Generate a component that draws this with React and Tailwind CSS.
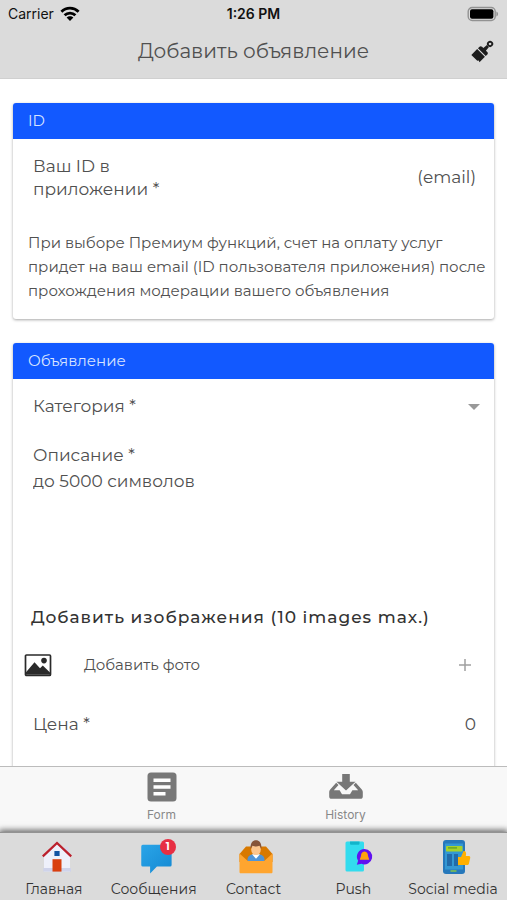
const navItems = [
  { id: 'home', label: 'Главная', Icon: HomeIcon },
  { id: 'messages', label: 'Сообщения', Icon: MessagesIcon, badge: 1 },
  { id: 'contact', label: 'Contact', Icon: ContactIcon },
  { id: 'push', label: 'Push', Icon: PushIcon },
  { id: 'social', label: 'Social media', Icon: SocialIcon },
];

function WifiIcon() {
  return (
    <svg className="h-4 w-5" viewBox="0 0 20 16" aria-hidden="true">
      <g fill="none" stroke="#000" strokeWidth="2.8">
        <path d="M1.4 5.8C6.3 1 13.7 1 18.6 5.8" />
        <path d="M4.6 9.3c3-3 7.8-3 10.800 0" />
      </g>
      <path d="M10 15 6.600 11.600c1.900-1.800 4.900-1.800 6.800 0z" />
    </svg>
  );
}

function BatteryIcon() {
  return (
    <svg className="h-4 w-8" viewBox="0 0 32 16" aria-hidden="true">
      <rect x="1.2" y="1.5" width="27" height="13" rx="4" fill="none" stroke="#929292" strokeWidth="1.4" />
      <rect x="3" y="3.3" width="23.4" height="9.4" rx="2" />
      <path d="M29.4 5.5c2.2 1 2.2 4 0 5z" fill="#929292" />
    </svg>
  );
}

function BrushIcon() {
  return (
    <svg className="h-6 w-6" viewBox="0 0 24 24" aria-hidden="true">
      <g transform="rotate(45 12 12)" fill="#1d1d1d">
        <path d="M6.500 14.800h11V22.500l-1.800-.8-.8 1.300H6.500z" />
        <path d="M6.500 13.600v-2.200c0-1 .7-1.700 1.800-1.700h1.900L10.600 5h2.800l.4 4.700h1.900c1.100 0 1.800.7 1.800 1.700v2.200z" />
        <circle cx="12" cy="2" r="2.200" fill="none" stroke="#1d1d1d" strokeWidth="1.800" />
      </g>
    </svg>
  );
}

function PhotoIcon() {
  return (
    <svg className="h-6 w-7" viewBox="0 0 28 24" aria-hidden="true">
      <rect x="1.500" y="2" width="25" height="20.500" rx="1" fill="#fff" stroke="#2a2a2a" strokeWidth="1.700" />
      <path d="M2 21.800v-2.600l8.500-10 5.500 6 2.800-2.800 7.200 7v2.400z" fill="#2a2a2a" />
      <circle cx="20" cy="7.600" r="2.800" fill="#2a2a2a" />
    </svg>
  );
}

function FormIcon() {
  return (
    <svg className="h-8 w-8" viewBox="0 0 32 32" aria-hidden="true">
      <rect x="1.500" y="1.500" width="29" height="29" rx="3.500" fill="#787878" />
      <path d="M7.500 7.500h17v3.600h-17zM7.500 14.200h17v3.600h-17zM7.500 20.900h12v3.600h-12z" fill="#fff" />
    </svg>
  );
}

function HistoryIcon() {
  return (
    <svg className="h-8 w-9" viewBox="0 0 36 32" aria-hidden="true">
      <g fill="#777">
        <path d="M14.200 3h7.600v7.700h5.700L18 19.500 8.500 10.700h5.700z" />
        <path d="m8.200 11.800 2.300 2.200-4.700 5.200h5.800l2.400 4h8l2.400-4h5.800L25.500 14l2.300-2.200 6 6.700c.7.800 1 1.500 1 2.500v4.500c0 1.400-.9 2.300-2.300 2.300h-29c-1.400 0-2.300-.9-2.300-2.300V21c0-1 .3-1.700 1-2.500z" />
      </g>
    </svg>
  );
}

function HomeIcon() {
  return (
    <svg className="h-9 w-9" viewBox="-3 0 36 36" aria-hidden="true">
      <path d="M26 8h3.500v8H26z" fill="#d5d6e8" />
      <path d="M18 5 5 17v15.600h26V17z" fill="#eef0fa" />
      <path d="M4.300 29H32v3.600H4.300z" fill="#cfd3ea" />
      <path d="M13.500 20.200h9v12.400h-9z" fill="#d9400f" />
      <path d="M15.400 12h5.200v5h-5.200z" fill="#1253a2" />
      <path d="M3.800 17.300 18 4l14.200 13.300" fill="none" stroke="#bb1f2c" strokeWidth="2.300" />
    </svg>
  );
}

function MessagesIcon() {
  return (
    <svg className="h-9 w-9" viewBox="-3 0 37 37" aria-hidden="true">
      <defs>
        <linearGradient id="bubble" x1="0" y1="0" x2="1" y2="1">
          <stop offset="0" stopColor="#2aa5e8" />
          <stop offset="1" stopColor="#1488d2" />
        </linearGradient>
      </defs>
      <path d="M4 6h28a1.600 1.600 0 0 1 1.600 1.600v19a1.600 1.600 0 0 1-1.600 1.600H18.500l-7 7.300v-7.300H4a1.600 1.600 0 0 1-1.600-1.600v-19A1.600 1.600 0 0 1 4 6z" fill="url(#bubble)" />
    </svg>
  );
}

function ContactIcon() {
  return (
    <svg className="h-9 w-9 overflow-visible" viewBox="-3 0 36 36" aria-hidden="true">
      <path d="M1.500 15 8 7.500h20L34.500 15v8h-33z" fill="#d87900" />
      <path d="M9.500 23v-2.500c0-3 2.500-4.800 5.500-5.200h6c3 .4 5.500 2.200 5.500 5.200V23z" fill="#5095d8" />
      <path d="m14 15.300 4 4.500 4-4.500z" fill="#fff" />
      <ellipse cx="18" cy="10.500" rx="4.800" ry="5.500" fill="#fcc58d" />
      <path d="M12.700 10C12 4.500 14.500 1.200 18 1.200S24 4.500 23.300 10l-1.800-3.200c-2.500 1-5 .8-7 0z" fill="#865439" />
      <path d="M1.500 14.500 9.800 22h16.400l8.300-7.500V33c0 .8-.5 1.300-1.300 1.300H2.800c-.8 0-1.300-.5-1.300-1.300z" fill="#ffa52f" />
    </svg>
  );
}

function PushIcon() {
  return (
    <svg className="h-9 w-9 overflow-visible" viewBox="0 0 36 36" aria-hidden="true">
      <rect x="10.500" y="2.500" width="18.500" height="30" rx="1.500" fill="#32dcee" />
      <path d="M15 2.500h9.500v2c0 .8-.5 1.300-1.300 1.300h-6.900c-.8 0-1.300-.5-1.300-1.300z" fill="#12b5cb" />
      <path d="M29.500 10a7.700 7.700 0 1 1-3 14.800l-4.700 1 1.300-4A7.700 7.700 0 0 1 29.500 10z" fill="#6211f0" />
      <path d="M29.500 12.500c2.600 0 3.500 2.200 3.500 4.500l1.300 3.800h-9.600L26 17c0-2.300.9-4.500 3.500-4.500z" fill="#ffa20d" />
    </svg>
  );
}

function SocialIcon() {
  return (
    <svg className="h-9 w-9" viewBox="0 0 36 36" aria-hidden="true">
      <rect x="8" y="1" width="22" height="34" rx="3" fill="#2678bb" />
      <rect x="10" y="4.500" width="18" height="26" fill="#3398d3" />
      <rect x="11" y="7" width="16.500" height="5.500" rx=".7" fill="#a6d22b" />
      <path d="M13 8.900h9" stroke="#64a329" strokeWidth="1.400" />
      <path d="M12 15h5v12h-5zM19 15h4v12h-4z" fill="#226ba9" />
      <path d="M15.500 32h6" stroke="#84c649" strokeWidth="1.500" />
      <path d="M23 18h3l2.500-6c2.600 0 3 2 2.300 5H34c1.100 0 1.400 1 1.200 2l-1.300 5.800c-.3.900-.8 1.300-1.700 1.300H23z" fill="#ffb000" />
    </svg>
  );
}

function SectionCard({ title, children }) {
  return (
    <section className="shrink-0 overflow-hidden rounded-[3px] bg-white shadow-[0_1px_3px_#00000059]">
      <h2 className="flex h-9 items-center bg-[#1259ff] px-[15px] text-[15px] text-[#d8e4ff]">
        {title}
      </h2>
      {children}
    </section>
  );
}

export default function App() {
  return (
    <div className="flex h-screen flex-col overflow-hidden bg-white font-['Montserrat','Inter',sans-serif] text-[#505050]">
      <header className="h-[79px] shrink-0 border-b border-[#d0d0d0] bg-[#dbdbdb]">
        <div className="grid h-7 grid-cols-3 items-center px-2 font-['Inter',sans-serif] text-sm text-[#111]">
          <div className="flex items-center gap-1.5">
            <span>Carrier</span>
            <WifiIcon />
          </div>
          <span className="text-center font-semibold">1:26 PM</span>
          <div className="flex justify-end">
            <BatteryIcon />
          </div>
        </div>
        <div className="grid grid-cols-[40px_1fr_40px] items-center pt-[9px]">
          <h1 className="col-start-2 text-center text-xl">Добавить объявление</h1>
          <button type="button" aria-label="Оформление" className="ml-1">
            <BrushIcon />
          </button>
        </div>
      </header>

      <main className="flex min-h-0 flex-1 flex-col gap-6 overflow-hidden px-[13px] pt-6">
        <SectionCard title="ID">
          <div className="flex items-center justify-between pt-4 pr-[18px] pl-5 text-[17px]">
            <label htmlFor="user-id" className="w-36 leading-[23px]">
              Ваш ID в приложении *
            </label>
            <input
              id="user-id"
              placeholder="(email)"
              className="w-40 min-w-0 text-right outline-none placeholder:text-[#505050]"
            />
          </div>
          <p className="pt-[30px] pr-1 pb-4 pl-[15px] text-[15px] leading-6">
            При выборе Премиум функций, счет на оплату услуг придет на ваш email (ID пользователя
            приложения) после прохождения модерации вашего объявления
          </p>
        </SectionCard>

        <SectionCard title="Объявление">
          <div className="flex h-14 items-center justify-between px-5 text-[17px]">
            <label htmlFor="category">Категория *</label>
            <div className="flex items-center">
              <select id="category" className="w-40 appearance-none bg-transparent outline-none" />
              <svg className="-mr-1.5 h-2 w-3" viewBox="0 0 12 8" aria-hidden="true">
                <path d="M0 1h12L6 7z" fill="#999" />
              </svg>
            </div>
          </div>
          <div className="px-5 pt-2 text-[17px]">
            <label htmlFor="description" className="block leading-6">
              Описание *
            </label>
            <textarea
              id="description"
              placeholder="до 5000 символов"
              className="block h-[134px] w-full resize-none leading-7 outline-none placeholder:text-[#505050]"
            />
          </div>
          <h3 className="px-[18px] text-[17px] leading-8 font-medium tracking-[1px] text-[#333]">
            Добавить изображения (10 images max.)
          </h3>
          <button type="button" className="flex h-16 w-full items-center px-[11px] text-left text-[15px]">
            <PhotoIcon />
            <span className="ml-8 flex-1">Добавить фото</span>
            <svg className="mr-3 h-3 w-3" viewBox="0 0 12 12" aria-hidden="true">
              <path d="M6 0v12M0 6h12" stroke="#a0a0a0" strokeWidth="1.500" />
            </svg>
          </button>
          <div className="flex h-14 items-center justify-between pr-[18px] pl-5 text-[17px]">
            <label htmlFor="price">Цена *</label>
            <input
              id="price"
              placeholder="0"
              className="w-40 text-right outline-none placeholder:text-[#505050]"
            />
          </div>
          <div className="h-12" />
        </SectionCard>
      </main>

      <div className="h-[66px] shrink-0 border-t border-[#bcbcbc] bg-[#f8f8f8]">
        <div className="flex justify-center gap-36 pt-1 font-['Inter',sans-serif] text-xs text-[#888]">
          <button type="button" className="flex w-10 flex-col items-center gap-1">
            <FormIcon />
            Form
          </button>
          <button type="button" className="flex w-10 flex-col items-center gap-1">
            <HistoryIcon />
            History
          </button>
        </div>
      </div>

      <nav className="z-10 grid h-[68px] shrink-0 grid-cols-5 border-t border-[#929292] bg-[#dbdbdb] px-1 pt-1.5 shadow-[0_-1px_6px_1px_#00000099]">
        {navItems.map(({ id, label, Icon, badge }) => (
          <a
            key={id}
            href={`#${id}`}
            className="flex flex-col items-center gap-1 text-sm whitespace-nowrap text-[#333]">
            <span className="relative">
              <Icon />
              {badge && (
                <span className="absolute top-0 -right-1 flex h-4 w-4 items-center justify-center rounded-full bg-[#e72f43] text-[10px] font-bold text-white">
                  {badge}
                </span>
              )}
            </span>
            {label}
          </a>
        ))}
      </nav>
    </div>
  );
}
